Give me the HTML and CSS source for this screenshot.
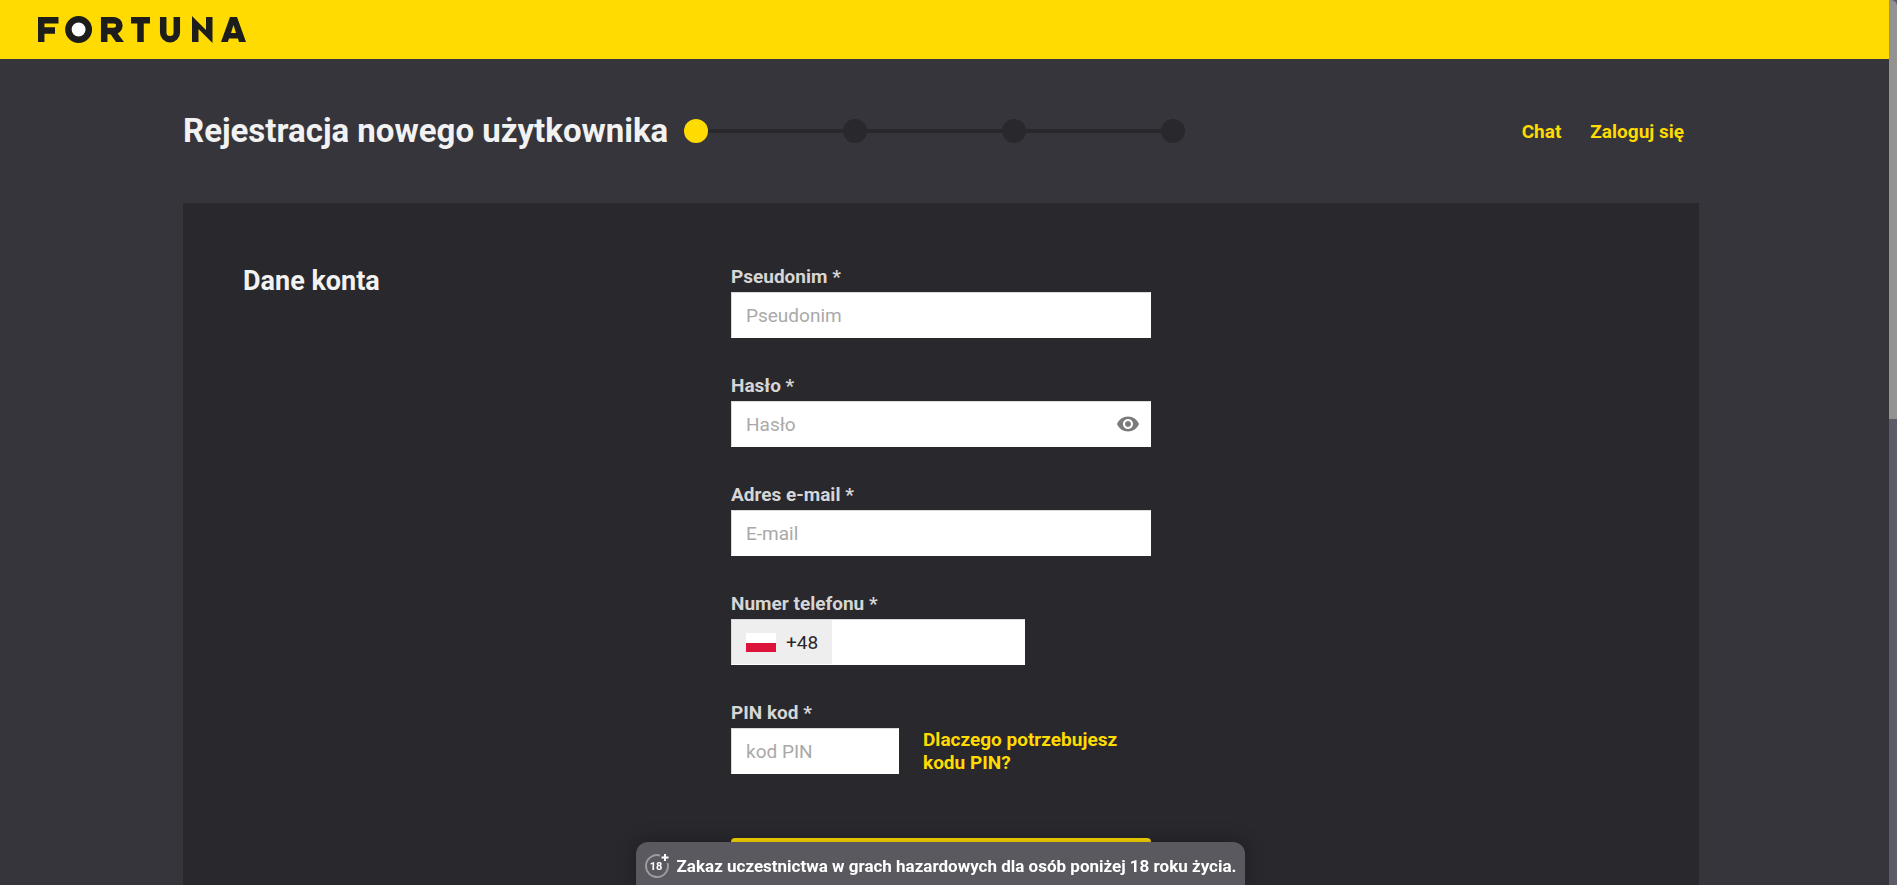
FILE: index.html
```html
<!DOCTYPE html>
<html lang="pl">
<head>
  <meta charset="UTF-8">
  <meta name="viewport" content="width=device-width, initial-scale=1.0">
  <title>Fortuna - Rejestracja</title>
  <link rel="stylesheet" href="styles.css">
</head>
<body>
  <header class="topbar">
    <a href="#" class="logo" aria-label="Fortuna">
      <svg width="208" height="28" viewBox="0 0 208 28" fill="none" stroke="#1d1d1b" stroke-width="6.5">
        <path d="M3.200 26V4.200H20.500M3 14.500H17"/>
        <circle cx="40.600" cy="13.500" r="10.200" fill="#fff"/>
        <path d="M66.200 26V4.200H76a5.300 5.300 0 0 1 0 10.800H66"/>
        <path d="M71 16H78.500L86 26H78Z" fill="#1d1d1b" stroke="none"/>
        <path d="M93 4.200H112M102.500 4V26"/>
        <path d="M125.200 1V16.500a6.800 6.800 0 0 0 13.600 0V1"/>
        <path d="M154 0L168 14V1H174.500V27L160.500 13V26H154Z" fill="#1d1d1b" stroke="none"/>
        <path d="M183 26L192 1H199L208 26H201L200 22.500H191L189.800 26ZM193 17H198L195.500 9Z" fill="#1d1d1b" fill-rule="evenodd" stroke="none"/>
      </svg>
    </a>
  </header>

  <main class="page">
    <div class="page-head">
      <h1>Rejestracja nowego użytkownika</h1>
      <ol class="steps" aria-label="Kroki rejestracji">
        <li class="step active"></li>
        <li class="step"></li>
        <li class="step"></li>
        <li class="step"></li>
      </ol>
      <nav class="links">
        <a href="#">Chat</a>
        <a href="#">Zaloguj się</a>
      </nav>
    </div>

    <section class="panel">
      <h2>Dane konta</h2>
      <form class="form">
        <div class="field">
          <label for="nick">Pseudonim *</label>
          <input type="text" id="nick" placeholder="Pseudonim">
        </div>
        <div class="field">
          <label for="password">Hasło *</label>
          <div class="password">
            <input type="password" id="password" placeholder="Hasło">
            <button type="button" class="eye" aria-label="Pokaż hasło">
              <svg width="24" height="24" viewBox="0 0 24 24" fill="#7b7b7b">
                <path d="M12 4.500C7 4.500 2.730 7.610 1 12c1.730 4.390 6 7.500 11 7.500s9.270-3.110 11-7.500c-1.730-4.390-6-7.500-11-7.500zM12 17c-2.760 0-5-2.240-5-5s2.240-5 5-5 5 2.240 5 5-2.240 5-5 5zm0-8c-1.660 0-3 1.340-3 3s1.340 3 3 3 3-1.340 3-3-1.340-3-3-3z"/>
              </svg>
            </button>
          </div>
        </div>
        <div class="field">
          <label for="email">Adres e-mail *</label>
          <input type="email" id="email" placeholder="E-mail">
        </div>
        <div class="field">
          <label for="phone">Numer telefonu *</label>
          <div class="phone">
            <span class="prefix"><span class="flag"></span>+48</span>
            <input type="tel" id="phone">
          </div>
        </div>
        <div class="field">
          <label for="pin">PIN kod *</label>
          <div class="pin">
            <input type="text" id="pin" placeholder="kod PIN">
            <a href="#">Dlaczego potrzebujesz kodu PIN?</a>
          </div>
        </div>
        <button type="submit" class="submit" aria-label="Kontynuuj"></button>
      </form>
    </section>
  </main>

  <div class="notice">
    <svg class="age" width="24" height="24" viewBox="0 0 24 24">
      <path d="M15 1.500A11 11 0 1 0 22.500 9" fill="none" stroke="#9b9ba1" stroke-width="2"/>
      <path d="M20 0v7M16.500 3.500h7" stroke="#fff" stroke-width="2"/>
      <text x="11" y="16" text-anchor="middle">18</text>
    </svg>
    <p>Zakaz uczestnictwa w grach hazardowych dla osób poniżej 18 roku życia.</p>
  </div>

  <div class="scrollbar"><div class="thumb"></div></div>
</body>
</html>
```

FILE: styles.css
```css
* {
  box-sizing: border-box;
}
body {
  margin: 0;
  height: 100vh;
  overflow: hidden;
  background: #36353b;
  color: #f2f2f2;
  font-family: Roboto, "Liberation Sans", sans-serif;
  font-size: 19px;
  line-height: 23px;
}
a {
  color: #ffdb01;
  font-weight: bold;
  text-decoration: none;
}
.topbar {
  display: flex;
  align-items: center;
  height: 59px;
  padding: 0 38px;
  background: #ffdb01;
}
.logo {
  display: flex;
}
.page {
  padding: 0 198px 0 183px;
}
.page-head {
  display: flex;
  align-items: center;
  height: 144px;
}
h1 {
  margin: 0;
  font-size: 33px;
  line-height: 40px;
  white-space: nowrap;
}
.steps {
  display: flex;
  justify-content: space-between;
  width: 501px;
  margin: 0 0 0 16px;
  padding: 0;
  list-style: none;
  background: linear-gradient(#29282d, #29282d) center / 100% 4px no-repeat;
}
.step {
  width: 24px;
  height: 24px;
  border-radius: 50%;
  background: #29282d;
}
.step.active {
  background: #ffdb01;
}
.links {
  display: flex;
  gap: 29px;
  margin-left: auto;
  padding-right: 15px;
}
.panel {
  display: flex;
  padding: 62px 60px;
  background: #29282d;
}
h2 {
  flex: 0 0 488px;
  margin: 0;
  font-size: 27px;
  line-height: 32px;
}
.form {
  width: 420px;
}
.field {
  margin-bottom: 36px;
}
label {
  display: block;
  margin-bottom: 4px;
  color: #d6d6d6;
  font-weight: bold;
}
input {
  display: block;
  width: 100%;
  height: 46px;
  padding: 0 14px;
  border: 1px solid #d9d9d9;
  border-right-color: #fff;
  border-bottom-color: #fff;
  border-radius: 0;
  background: #fff;
  color: #29282d;
  font: inherit;
}
input::placeholder {
  color: #a9a9a9;
}
.password {
  position: relative;
}
.eye {
  position: absolute;
  top: 11px;
  right: 11px;
  display: flex;
  padding: 0;
  border: none;
  background: none;
  cursor: pointer;
}
.phone {
  display: flex;
  width: 294px;
  height: 46px;
  border: 1px solid #d9d9d9;
  border-right-color: #fff;
  border-bottom-color: #fff;
  background: #fff;
}
.phone input {
  flex: 1;
  height: 44px;
  min-width: 0;
  border: none;
}
.prefix {
  display: flex;
  align-items: center;
  gap: 10px;
  padding: 0 14px;
  background: #eee;
  color: #29282d;
}
.flag {
  width: 30px;
  height: 19px;
  background: linear-gradient(#fff 50%, #dc143c 50%);
}
.pin {
  display: flex;
  align-items: center;
  gap: 24px;
}
.pin input {
  width: 168px;
}
.pin a {
  width: 210px;
}
.submit {
  width: 100%;
  height: 58px;
  margin-top: 28px;
  border: none;
  border-radius: 4px;
  background: #ffdb01;
}
.notice {
  position: fixed;
  bottom: 0;
  left: calc(50% - 8px);
  display: flex;
  align-items: center;
  gap: 8px;
  height: 43px;
  padding: 5px 9px 0;
  border-radius: 12px 12px 0 0;
  background: #5a5960;
  box-shadow: 0 0 20px rgba(0, 0, 0, 0.3);
  color: #fff;
  font-size: 17px;
  font-weight: bold;
  white-space: nowrap;
  transform: translateX(-50%);
}
.notice p {
  margin: 0;
}
.age text {
  fill: #fff;
  font-size: 11px;
}
.scrollbar {
  position: fixed;
  top: 0;
  right: 0;
  bottom: 0;
  width: 8px;
  background: #5c5b69;
}
.thumb {
  height: 419px;
  border-top-right-radius: 6px;
  background: #939393;
}
```
